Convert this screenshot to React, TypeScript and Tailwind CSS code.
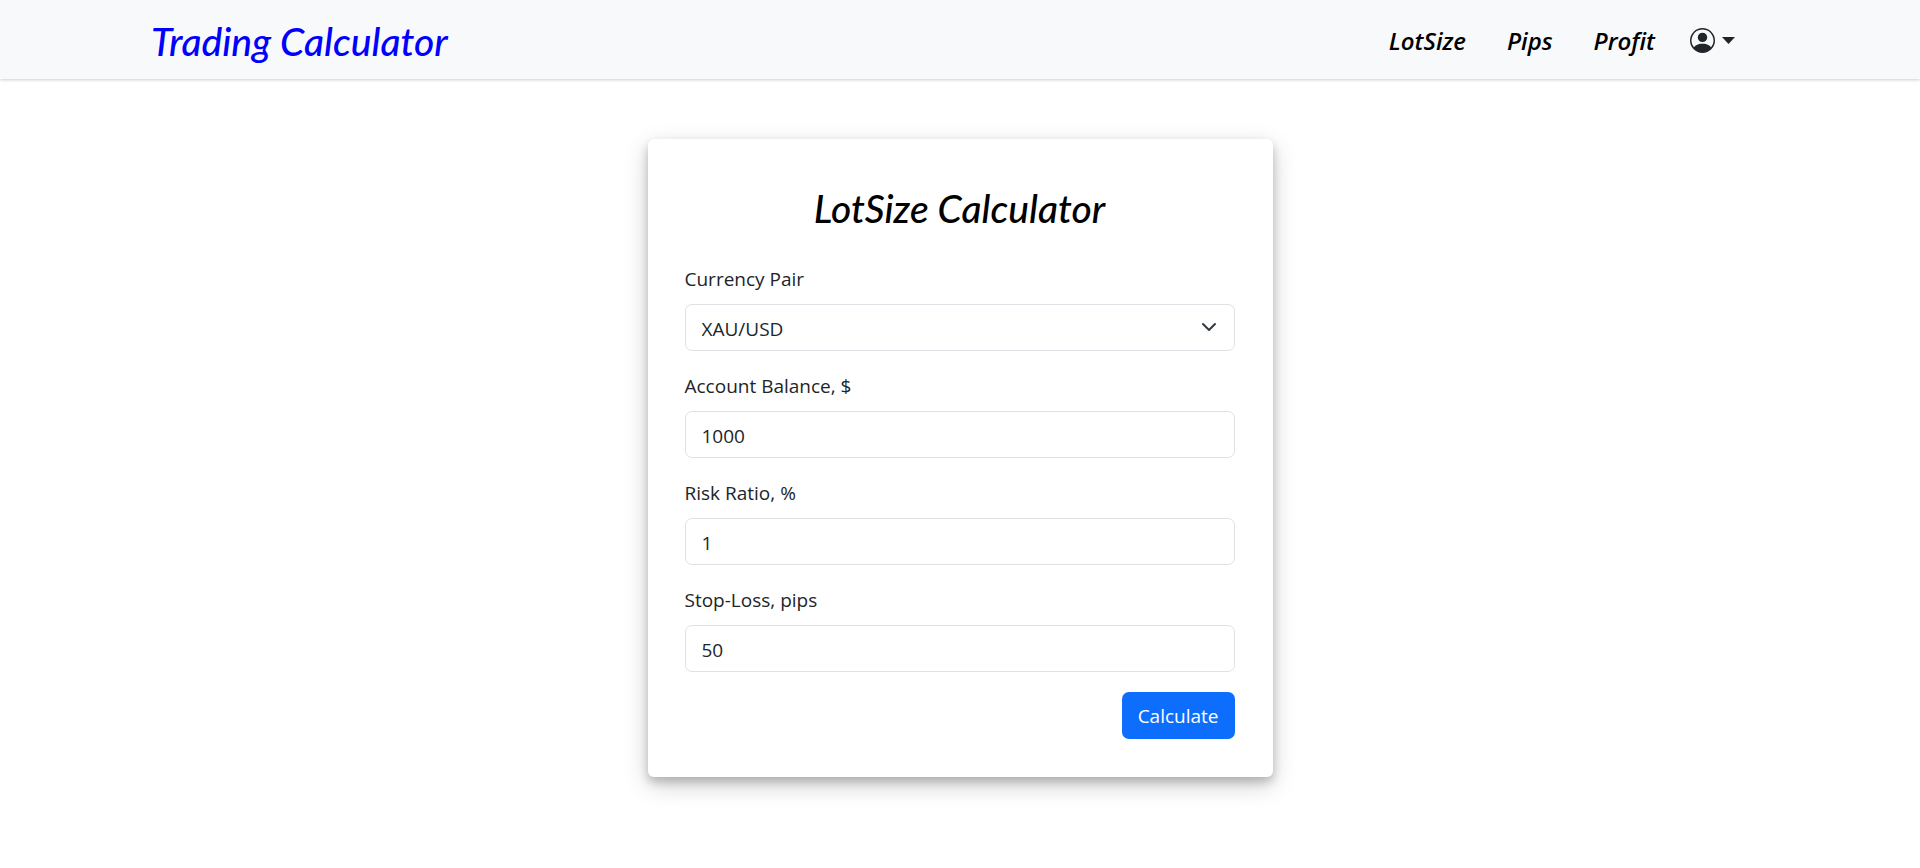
import { useState } from "react";

const navItems = ["LotSize", "Pips", "Profit"];

const pairs = ["XAU/USD", "EUR/USD", "GBP/USD", "USD/JPY"];

const fieldClass =
  "block h-[47px] w-full rounded-[7px] border border-[#dee2e6] bg-white px-[16px] pt-[2px] text-[19px] leading-[30px] text-[#212529] outline-none focus:border-[#86b7fe]";

function PersonCircleIcon() {
  return (
    <svg className="h-[25px] w-[25px]" viewBox="0 0 16 16" fill="currentColor" aria-hidden="true">
      <path d="M11 6a3 3 0 1 1-6 0 3 3 0 0 1 6 0" />
      <path
        fillRule="evenodd"
        d="M0 8a8 8 0 1 1 16 0A8 8 0 0 1 0 8m8-7a7 7 0 0 0-5.468 11.37C3.242 11.226 4.805 10 8 10s4.757 1.225 5.468 2.37A7 7 0 0 0 8 1"
      />
    </svg>
  );
}

function Header() {
  return (
    <header className="bg-[#f8f9fb] shadow-[0_1px_3px_rgba(0,0,0,0.2)]">
      <div className="mx-auto flex h-[79px] max-w-[1620px] items-center justify-between pt-[2px] pr-[35px] pl-[1px]">
        <a
          href="#"
          className="font-['Lato',sans-serif] text-[39px] leading-[48px] font-medium whitespace-nowrap text-[#0000ff] italic"
        >
          Trading Calculator
        </a>
        <nav className="flex items-center">
          <ul className="flex items-center gap-[41px]">
            {navItems.map((item) => (
              <li key={item}>
                <a href="#" className="text-[24px] leading-[38px] font-semibold text-black italic">
                  {item}
                </a>
              </li>
            ))}
          </ul>
          <button type="button" aria-label="Account" className="ml-[35px] flex items-center gap-[7px] text-[#212529]">
            <PersonCircleIcon />
            <svg className="h-[7px] w-[13px]" viewBox="0 0 13 7" fill="currentColor" aria-hidden="true">
              <path d="M0 0h13L6.500 7z" />
            </svg>
          </button>
        </nav>
      </div>
    </header>
  );
}

type NumberFieldProps = {
  id: string;
  label: string;
  value: string;
  onChange: (value: string) => void;
};

function NumberField({ id, label, value, onChange }: NumberFieldProps) {
  return (
    <div className="flex flex-col gap-[9px]">
      <label htmlFor={id}>{label}</label>
      <input
        id={id}
        type="text"
        inputMode="decimal"
        className={fieldClass}
        value={value}
        onChange={(e) => onChange(e.target.value)}
      />
    </div>
  );
}

export default function App() {
  const [pair, setPair] = useState("XAU/USD");
  const [balance, setBalance] = useState("1000");
  const [risk, setRisk] = useState("1");
  const [stopLoss, setStopLoss] = useState("50");

  return (
    <div className="min-h-screen bg-white font-['Open_Sans',sans-serif] text-[19px] leading-[31px] text-[#212529]">
      <Header />
      <main className="px-4 pt-[60px] pb-[60px]">
        <form
          onSubmit={(e) => e.preventDefault()}
          className="mx-auto flex w-full max-w-[625px] flex-col gap-[20px] rounded-[6px] bg-white pt-[37px] pr-[38px] pb-[38px] pl-[37px] shadow-[0_5px_10px_rgba(0,0,0,0.2),0_8px_25px_rgba(0,0,0,0.19)]"
        >
          <h1 className="pt-[8px] pb-[12px] text-center font-['Lato',sans-serif] text-[39px] leading-[48px] font-medium text-black italic">
            LotSize Calculator
          </h1>
          <div className="flex flex-col gap-[9px]">
            <label htmlFor="pair">Currency Pair</label>
            <div className="relative">
              <select
                id="pair"
                className={fieldClass + " appearance-none"}
                value={pair}
                onChange={(e) => setPair(e.target.value)}
              >
                {pairs.map((p) => (
                  <option key={p}>{p}</option>
                ))}
              </select>
              <svg
                className="pointer-events-none absolute top-[13px] right-[16px] h-[20px] w-[20px]"
                viewBox="0 0 16 16"
                fill="none"
                stroke="#343a40"
                strokeWidth="1.600"
                strokeLinecap="round"
                strokeLinejoin="round"
                aria-hidden="true"
              >
                <path d="M3.200 5.600 8 10.400l4.800-4.800" />
              </svg>
            </div>
          </div>
          <NumberField id="balance" label="Account Balance, $" value={balance} onChange={setBalance} />
          <NumberField id="risk" label="Risk Ratio, %" value={risk} onChange={setRisk} />
          <NumberField id="stop-loss" label="Stop-Loss, pips" value={stopLoss} onChange={setStopLoss} />
          <button
            type="submit"
            className="h-[47px] self-end rounded-[7px] bg-[#0d6efd] px-[16px] pt-[2px] text-white hover:bg-[#0b5ed7]"
          >
            Calculate
          </button>
        </form>
      </main>
    </div>
  );
}
